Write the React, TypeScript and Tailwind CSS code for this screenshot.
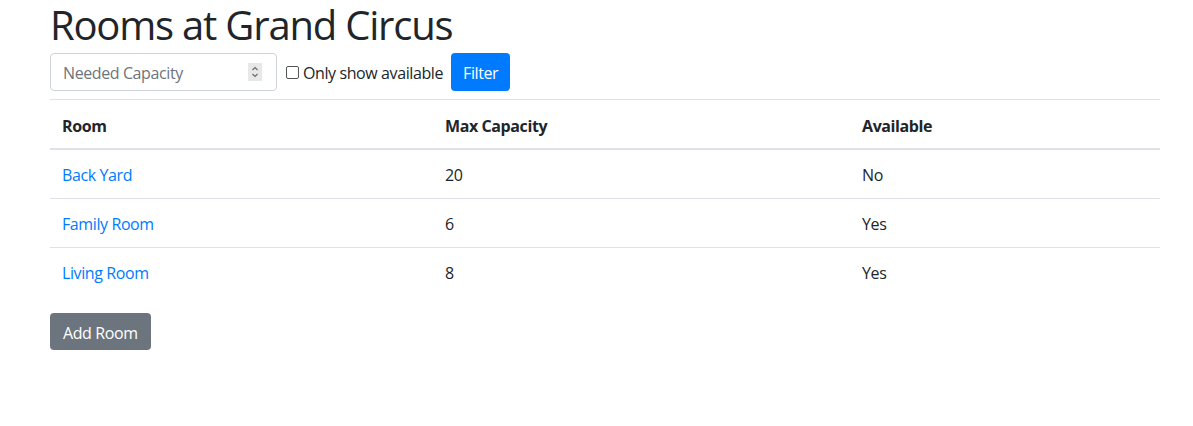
const rooms = [
  { name: "Back Yard", capacity: 20, available: "No" },
  { name: "Family Room", capacity: 6, available: "Yes" },
  { name: "Living Room", capacity: 8, available: "Yes" },
];

function Spinner() {
  return (
    <div className="flex h-[18px] w-[14px] items-center justify-center bg-[#e8e8e8]">
      <svg width="10" height="14" viewBox="0 0 10 14" fill="none" stroke="#6b6b6b" strokeWidth="1.2">
        <path d="M2.5 5 L5 2.5 L7.5 5" />
        <path d="M2.5 9 L5 11.5 L7.5 9" />
      </svg>
    </div>
  );
}

export default function App() {
  return (
    <div className="min-h-screen bg-white text-[#212529] font-['Open_Sans',sans-serif] tracking-[-0.025em]">
      <div className="ml-[50px] w-[1110px]">
        <h1 className="mb-[3px] text-[40px] leading-[50px] font-normal tracking-[-0.03em]">
          Rooms at Grand Circus
        </h1>

        {/* Filter form */}
        <div className="flex items-center">
          <div className="flex h-[38px] w-[227px] items-center justify-between rounded border border-[#ced4da] pl-[12px] pr-[14px]">
            <span className="pt-[2px] text-[16px] text-[#6c757d]">Needed Capacity</span>
            <Spinner />
          </div>
          <label className="ml-[9px] flex items-center text-[16px]">
            <span className="mr-[4px] h-[13px] w-[13px] rounded-[2px] border border-[#555] bg-white" />
            <span className="pt-[2px]">Only show available</span>
          </label>
          <button className="ml-[8px] h-[38px] rounded bg-[#007bff] px-[12px] pt-[2px] text-[16px] text-white">
            Filter
          </button>
        </div>

        {/* Rooms table */}
        <table className="mt-[8px] mb-[17px] w-full border-collapse text-[16px]">
          <thead>
            <tr className="border-t border-[#dee2e6]">
              <th className="w-[383px] border-b-2 border-[#dee2e6] px-[12px] pt-[14px] pb-[10px] text-left font-bold">Room</th>
              <th className="w-[417px] border-b-2 border-[#dee2e6] px-[12px] pt-[14px] pb-[10px] text-left font-bold">Max Capacity</th>
              <th className="border-b-2 border-[#dee2e6] px-[12px] pt-[14px] pb-[10px] text-left font-bold">Available</th>
            </tr>
          </thead>
          <tbody>
            {rooms.map((room) => (
              <tr key={room.name} className="border-t border-[#dee2e6] first:border-t-0">
                <td className="h-[49px] px-[12px] pt-[2px]">
                  <a href="#" className="text-[#007bff]">{room.name}</a>
                </td>
                <td className="px-[12px] pt-[2px]">{room.capacity}</td>
                <td className="px-[12px] pt-[2px]">{room.available}</td>
              </tr>
            ))}
          </tbody>
        </table>

        <button className="h-[37px] rounded bg-[#6c757d] px-[13px] pt-[2px] text-[16px] text-white">
          Add Room
        </button>
      </div>
    </div>
  );
}
